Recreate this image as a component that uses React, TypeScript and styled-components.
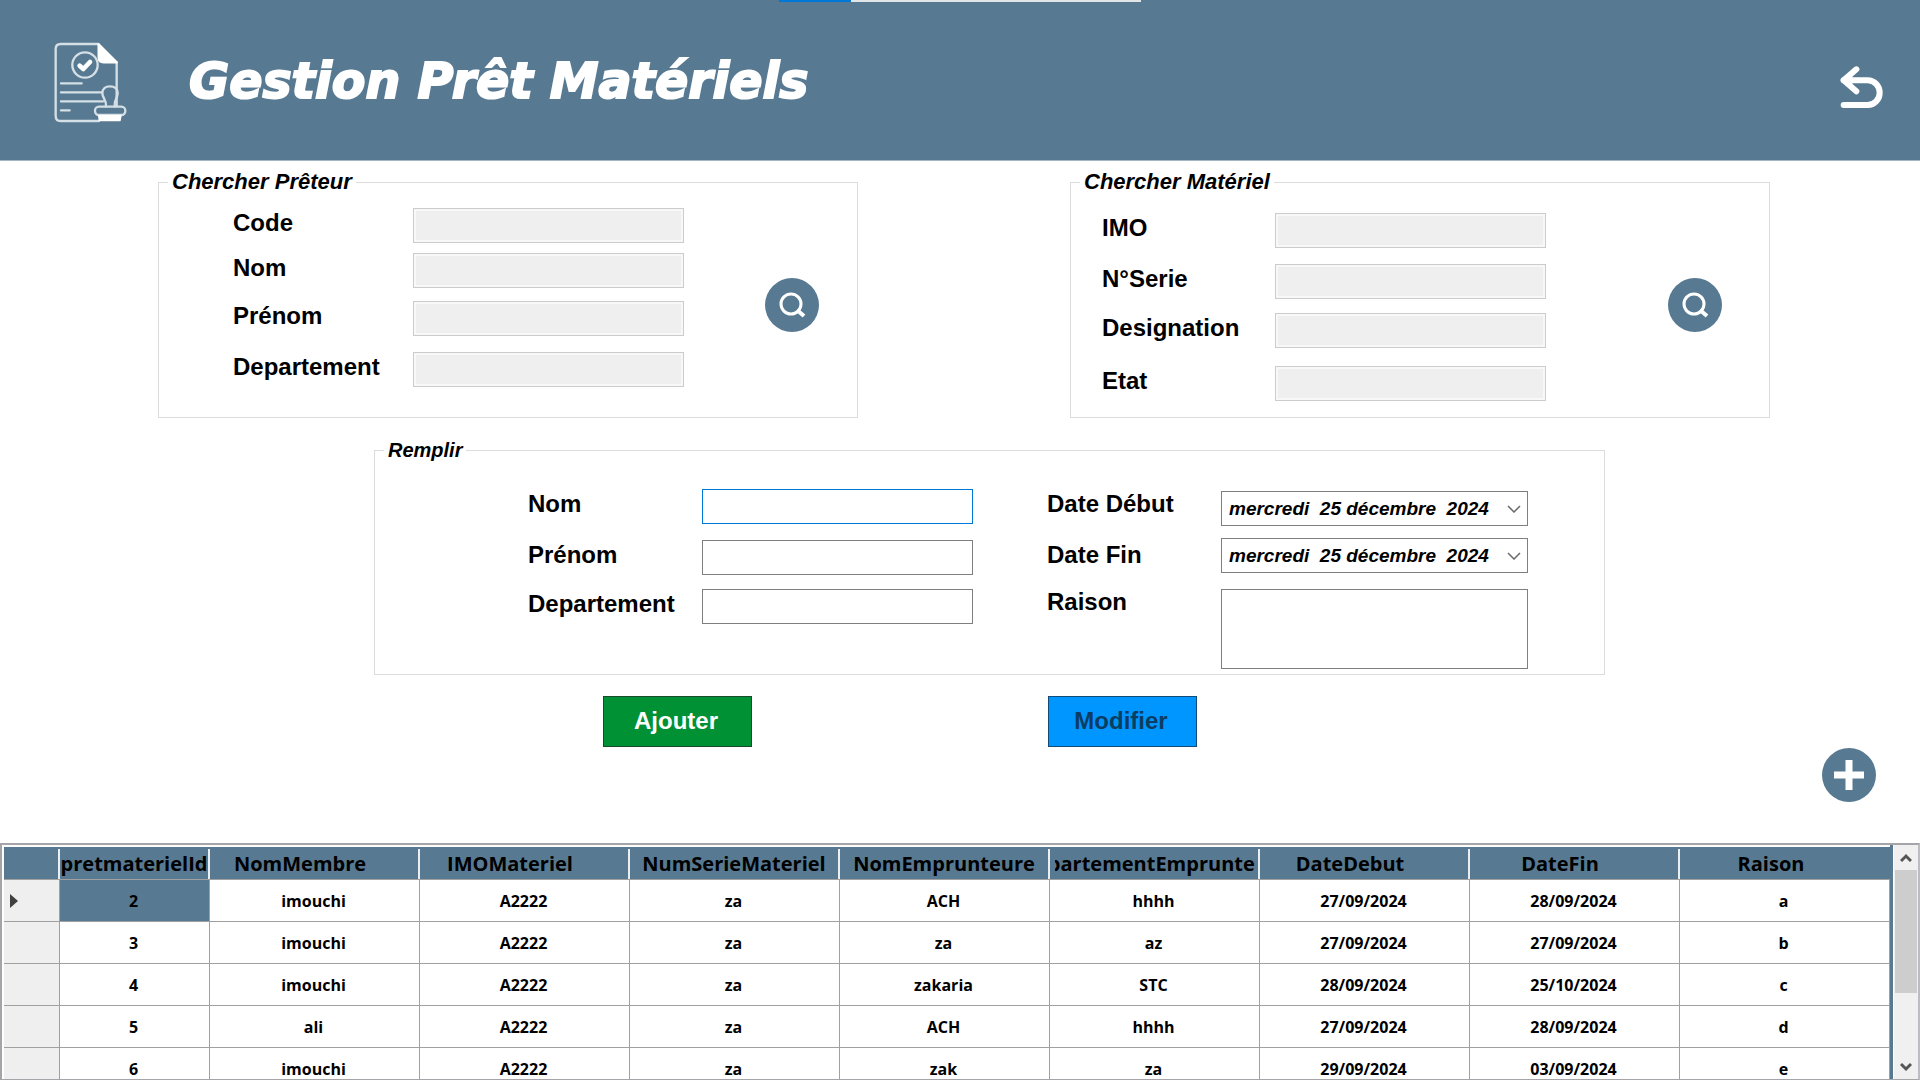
import React from "react";
import styled, { createGlobalStyle } from "styled-components";

const slate = "#577a92";
const arial = '"Liberation Sans", Arial, sans-serif';
const segoe = '"Open Sans", "Noto Sans", sans-serif';

const GlobalStyle = createGlobalStyle`
  * { box-sizing: border-box; }
  body { margin: 0; background: #fff; color: #000; font-family: ${arial}; }
`;

const Page = styled.div`
  display: flex;
  flex-direction: column;
  height: 100vh;
  overflow: hidden;
`;

const Header = styled.header`
  position: relative;
  display: flex;
  align-items: flex-start;
  flex: none;
  height: 161px;
  padding: 42px 35px 0 53px;
  background: ${slate};
  border-bottom: 1px solid #a3b6c4;
`;

const TopStrip = styled.div`
  position: absolute;
  top: 0;
  left: 50%;
  width: 362px;
  height: 2px;
  margin-left: -181px;
  background: linear-gradient(to right, #0078d7 72px, #e1e5e8 72px);
`;

const Title = styled.h1`
  flex: 1;
  margin: 0 0 0 62px;
  color: #fff;
  font: italic bold 49px/80px "DejaVu Sans", ${arial};
  -webkit-text-stroke: 2px #fff;
  white-space: nowrap;
`;

const BackButton = styled.button`
  display: flex;
  padding: 21px 0 0;
  border: 0;
  background: none;
`;

const Main = styled.main`
  flex: none;
  padding-top: 9px;
`;

const SearchPanels = styled.div`
  display: grid;
  grid-template-columns: 1fr 1fr;
  gap: 212px;
  padding: 0 150px 0 158px;
`;

const Group = styled.fieldset`
  min-width: 0;
  margin: 0;
  padding: 0;
  border: 1px solid #dcdcdc;
`;

const FillGroup = styled(Group)`
  margin: 20px 315px 0 374px;
`;

const Legend = styled.legend<{ $size?: number }>`
  margin-left: 9px;
  padding: 0 4px;
  font: italic bold ${(p) => p.$size ?? 22}px/24px ${arial};
`;

const SearchBody = styled.div<{ $left: number; $right: number }>`
  display: flex;
  justify-content: space-between;
  align-items: flex-start;
  height: 223px;
  padding: 0 ${(p) => p.$right}px 1px ${(p) => p.$left}px;
`;

const FieldGrid = styled.div<{ $label: number; $rows: string; $top: number; $field?: number }>`
  display: grid;
  grid-template-columns: ${(p) => p.$label}px ${(p) => p.$field ?? 271}px;
  grid-template-rows: ${(p) => p.$rows};
  align-items: start;
  padding-top: ${(p) => p.$top}px;
`;

const DateGrid = styled(FieldGrid)`
  row-gap: 14px;
  padding-bottom: 5px;
`;

const FillBody = styled.div`
  display: flex;
  gap: 74px;
  padding-left: 153px;
`;

const Label = styled.label`
  font: bold 24px/30px ${arial};
  white-space: nowrap;
`;

const TextInput = styled.input<{ $active?: boolean }>`
  width: 100%;
  height: 35px;
  padding: 2px 6px;
  border: 1px solid ${(p) => (p.$active ? "#0078d7" : "#7f7f7f")};
  border-radius: 0;
  background: #fff;
  font: bold 20px ${arial};
  outline: none;

  &:disabled {
    border-color: #cccccc;
    background: #efefef;
    box-shadow: inset 0 0 0 2px #f8f8f8;
  }
`;

const TextArea = styled.textarea`
  display: block;
  align-self: end;
  width: 100%;
  height: 80px;
  padding: 4px 6px;
  border: 1px solid #7f7f7f;
  border-radius: 0;
  background: #fff;
  font: bold 20px ${arial};
  resize: none;
`;

const DateBox = styled.div`
  display: grid;
  grid-template-columns: 1fr 21px;
  align-items: center;
  align-self: end;
  height: 35px;

  svg { grid-area: 1 / 2; pointer-events: none; }
`;

const DateSelect = styled.select`
  grid-area: 1 / 1 / 2 / 3;
  width: 100%;
  height: 35px;
  padding: 0 7px;
  appearance: none;
  border: 1px solid #7f7f7f;
  border-radius: 0;
  background: #fff;
  color: #000;
  font: italic bold 19px/33px ${arial};
`;

const RoundButton = styled.button`
  display: flex;
  align-self: center;
  flex: none;
  padding: 0;
  border: 0;
  border-radius: 50%;
  background: ${slate};
`;

const Actions = styled.div`
  display: flex;
  gap: 296px;
  padding: 21px 0 0 603px;
`;

const ActionButton = styled.button<{ $bg: string; $fg: string; $edge: string }>`
  width: 149px;
  height: 51px;
  padding: 0 3px 2px 0;
  border: 1px solid ${(p) => p.$edge};
  border-radius: 0;
  background: ${(p) => p.$bg};
  color: ${(p) => p.$fg};
  font: bold 24px/28px ${arial};
`;

const AddRow = styled.div`
  display: flex;
  justify-content: flex-end;
  padding: 1px 44px 41px 0;
`;

const GridFrame = styled.section`
  display: flex;
  flex: 1;
  min-height: 0;
  border: 2px solid #a5a5a9;
  border-right-color: #bcbdc2;
  border-bottom-width: 1px;
`;

const TableClip = styled.div`
  flex: 1;
  min-width: 0;
  padding: 2px 0 0 2px;
  overflow: hidden;
`;

const Table = styled.table`
  width: 100%;
  border-collapse: separate;
  border-spacing: 0;
  table-layout: fixed;
`;

const HeadCell = styled.th<{ $width?: number }>`
  width: ${(p) => (p.$width ? p.$width + "px" : "auto")};
  height: 33px;
  padding: 2px 0 0;
  border-bottom: 1px solid #a0a0a0;
  background: ${slate};
`;

const HeadText = styled.div<{ $pad: string; $divider: boolean }>`
  display: flex;
  justify-content: center;
  padding: ${(p) => p.$pad};
  border-right: ${(p) => (p.$divider ? "2px solid #eceff1" : "0")};
  font: bold 20px/30px ${segoe};
  white-space: nowrap;

  span {
    display: flex;
    justify-content: center;
    min-width: 0;
    overflow: hidden;
  }
`;

const Cell = styled.td<{ $selected?: boolean }>`
  height: 42px;
  padding: 1px 2px 0 0;
  border-right: 1px solid #a0a0a0;
  border-bottom: 1px solid #a0a0a0;
  background: ${(p) => (p.$selected ? slate : "#fff")};
  font: bold 16px/24px ${segoe};
  text-align: center;
`;

const RowHead = styled.th`
  height: 42px;
  padding: 0 0 0 6px;
  border-right: 1px solid #a0a0a0;
  border-bottom: 1px solid #a0a0a0;
  background: #efefef;
  text-align: left;

  svg { display: block; }
`;

const Stripe = styled.div`
  flex: none;
  width: 4px;
  border-right: 1px solid #fff;
  background: ${slate};
`;

const ScrollTrack = styled.div`
  display: flex;
  flex: none;
  flex-direction: column;
  width: 24px;
  background: #f0f0f0;
`;

const ScrollArrow = styled.button`
  display: flex;
  justify-content: center;
  align-items: center;
  flex: none;
  height: 25px;
  padding: 0;
  border: 0;
  background: none;
`;

const ScrollThumb = styled.div`
  flex: none;
  height: 123px;
  margin: 0 1px;
  background: #cdcdcd;
`;

const Spacer = styled.div`
  flex: 1;
`;

const DocumentIcon = () => (
  <svg width="74" height="81" viewBox="69 36 222 243" fill="none" stroke="#d5dfe6" strokeWidth="7" strokeLinecap="round" strokeLinejoin="round">
    <path d="M205 42H92Q77 42 77 57V257Q77 273 92 273H207M260 97V228" />
    <path d="M206 43L260 97H221Q206 97 206 82Z" fill="#fff" stroke="#fff" />
    <circle cx="165" cy="105" r="38" />
    <path d="M149 107L160 117L180 96" stroke="#fff" strokeWidth="14" />
    <path d="M93 160H155M93 187H214M93 214H219M93 241H119" />
    <path d="M228 229C229 207 217 204 217 190C217 177 226 169 240 169C254 169 263 177 263 190C263 204 252 208 254 229" />
    <rect x="195" y="230" width="91" height="25" rx="12" />
    <path d="M206 257H273L270 272H208Z" fill="#fff" stroke="#fff" strokeWidth="4" />
  </svg>
);

const ReturnIcon = () => (
  <svg width="47" height="48" viewBox="175 100 141 144" fill="none" stroke="#fff" strokeWidth="18" strokeLinejoin="round">
    <path d="M230 119L192 152L230 185" strokeLinecap="round" />
    <path d="M192 152H264A36 37 0 0 1 264 226H192" strokeLinecap="round" />
    <path d="M192 152L216 134V170Z" fill="#fff" strokeWidth="4" />
  </svg>
);

const SearchIcon = () => (
  <svg width="54" height="54" viewBox="0 0 54 54" fill="none" stroke="#fff" strokeWidth="3">
    <circle cx="26" cy="26" r="10" />
    <path d="M32 32L39 38" strokeWidth="4" />
  </svg>
);

const PlusIcon = () => (
  <svg width="54" height="54" viewBox="0 0 54 54" stroke="#fff" strokeWidth="7">
    <path d="M12 27H42M27 12V42" />
  </svg>
);

const DateChevron = () => (
  <svg width="14" height="8" viewBox="0 0 14 8" fill="none" stroke="#6a6a6a" strokeWidth="1.5">
    <path d="M1 1L7 7L13 1" />
  </svg>
);

const ScrollChevron = ({ up }: { up?: boolean }) => (
  <svg width="12" height="10" viewBox="0 0 12 10" fill="none" stroke="#555" strokeWidth="3">
    <path d={up ? "M1 8L6 3L11 8" : "M1 2L6 7L11 2"} />
  </svg>
);

const lenderFields = ["Code", "Nom", "Prénom", "Departement"];
const materialFields = ["IMO", "N°Serie", "Designation", "Etat"];
const fillFields = ["Nom", "Prénom", "Departement"];
const dateFields = ["Date Début", "Date Fin"];
const today = "mercredi\u00a0 25 décembre\u00a0 2024";

const sortable = "0 30px 0 2px";
const full = "0";
const clipped = "0 3px 0 5px";

const columns = [
  { name: "pretmaterielId", pad: full, width: 150 },
  { name: "NomMembre", pad: sortable },
  { name: "IMOMateriel", pad: sortable },
  { name: "NumSerieMateriel", pad: full },
  { name: "NomEmprunteure", pad: full },
  { name: "DepartementEmprunteure", pad: clipped },
  { name: "DateDebut", pad: sortable },
  { name: "DateFin", pad: sortable },
  { name: "Raison", pad: sortable },
];

const rows = [
  ["2", "imouchi", "A2222", "za", "ACH", "hhhh", "27/09/2024", "28/09/2024", "a"],
  ["3", "imouchi", "A2222", "za", "za", "az", "27/09/2024", "27/09/2024", "b"],
  ["4", "imouchi", "A2222", "za", "zakaria", "STC", "28/09/2024", "25/10/2024", "c"],
  ["5", "ali", "A2222", "za", "ACH", "hhhh", "27/09/2024", "28/09/2024", "d"],
  ["6", "imouchi", "A2222", "za", "zak", "za", "29/09/2024", "03/09/2024", "e"],
];

export default function App() {
  return (
    <Page>
      <GlobalStyle />
      <Header>
        <TopStrip />
        <DocumentIcon />
        <Title>Gestion Prêt Matériels</Title>
        <BackButton aria-label="Retour">
          <ReturnIcon />
        </BackButton>
      </Header>

      <Main>
        <SearchPanels>
          <Group>
            <Legend>Chercher Prêteur</Legend>
            <SearchBody $left={74} $right={38}>
              <FieldGrid $label={180} $rows="45px 48px 51px 35px" $top={14}>
                {lenderFields.map((name) => (
                  <React.Fragment key={name}>
                    <Label htmlFor={"preteur-" + name}>{name}</Label>
                    <TextInput id={"preteur-" + name} disabled />
                  </React.Fragment>
                ))}
              </FieldGrid>
              <RoundButton aria-label="Chercher prêteur">
                <SearchIcon />
              </RoundButton>
            </SearchBody>
          </Group>

          <Group>
            <Legend>Chercher Matériel</Legend>
            <SearchBody $left={31} $right={47}>
              <FieldGrid $label={173} $rows="51px 49px 53px 35px" $top={19}>
                {materialFields.map((name) => (
                  <React.Fragment key={name}>
                    <Label htmlFor={"materiel-" + name}>{name}</Label>
                    <TextInput id={"materiel-" + name} disabled />
                  </React.Fragment>
                ))}
              </FieldGrid>
              <RoundButton aria-label="Chercher matériel">
                <SearchIcon />
              </RoundButton>
            </SearchBody>
          </Group>
        </SearchPanels>

        <FillGroup>
          <Legend $size={20}>Remplir</Legend>
          <FillBody>
            <FieldGrid $label={174} $rows="51px 49px 35px" $top={27}>
              {fillFields.map((name, i) => (
                <React.Fragment key={name}>
                  <Label htmlFor={"remplir-" + name}>{name}</Label>
                  <TextInput id={"remplir-" + name} $active={i === 0} />
                </React.Fragment>
              ))}
            </FieldGrid>
            <DateGrid $label={174} $field={307} $rows="37px 33px 82px" $top={27}>
              {dateFields.map((name) => (
                <React.Fragment key={name}>
                  <Label htmlFor={name}>{name}</Label>
                  <DateBox>
                    <DateSelect id={name}>
                      <option>{today}</option>
                    </DateSelect>
                    <DateChevron />
                  </DateBox>
                </React.Fragment>
              ))}
              <Label htmlFor="raison">Raison</Label>
              <TextArea id="raison" />
            </DateGrid>
          </FillBody>
        </FillGroup>

        <Actions>
          <ActionButton $bg="#009135" $fg="#fff" $edge="#1b4a2b">Ajouter</ActionButton>
          <ActionButton $bg="#0096ff" $fg="#0b3c62" $edge="#134b78">Modifier</ActionButton>
        </Actions>
        <AddRow>
          <RoundButton aria-label="Nouveau">
            <PlusIcon />
          </RoundButton>
        </AddRow>
      </Main>

      <GridFrame>
        <TableClip>
          <Table>
            <thead>
              <tr>
                <HeadCell $width={56}>
                  <HeadText $pad={full} $divider>&nbsp;</HeadText>
                </HeadCell>
                {columns.map(({ name, pad, width }, i) => (
                  <HeadCell key={name} $width={width} scope="col">
                    <HeadText $pad={pad} $divider={i < columns.length - 1}>
                      <span>{name}</span>
                    </HeadText>
                  </HeadCell>
                ))}
              </tr>
            </thead>
            <tbody>
              {rows.map((row, r) => (
                <tr key={row[0]}>
                  <RowHead>
                    {r === 0 && (
                      <svg width="9" height="14" viewBox="0 0 9 14">
                        <path d="M0 0L8 7L0 14Z" fill="#404040" />
                      </svg>
                    )}
                  </RowHead>
                  {row.map((value, c) => (
                    <Cell key={c} $selected={r === 0 && c === 0}>
                      {value}
                    </Cell>
                  ))}
                </tr>
              ))}
            </tbody>
          </Table>
        </TableClip>
        <Stripe />
        <ScrollTrack>
          <ScrollArrow aria-label="Monter">
            <ScrollChevron up />
          </ScrollArrow>
          <ScrollThumb />
          <Spacer />
          <ScrollArrow aria-label="Descendre">
            <ScrollChevron />
          </ScrollArrow>
        </ScrollTrack>
      </GridFrame>
    </Page>
  );
}
